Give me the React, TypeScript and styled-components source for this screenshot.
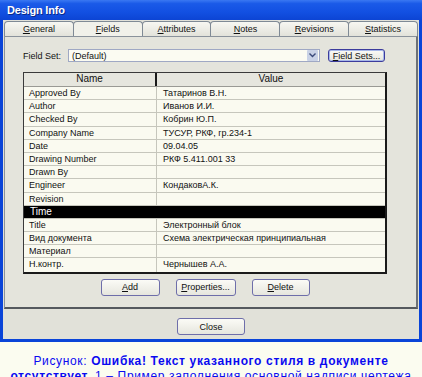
import * as React from 'react';
import styled, { createGlobalStyle } from 'styled-components';

const Global = createGlobalStyle`
  html, body {
    margin: 0;
    padding: 0;
    background: #fbfcf0;
  }
  body {
    font-family: 'Liberation Sans', Arial, sans-serif;
    width: 422px;
    height: 377px;
    overflow: hidden;
  }
`;

const Window = styled.div`
  width: 422px;
  display: flex;
  flex-direction: column;
`;
const TitleBar = styled.div`
  height: 20px;
  box-sizing: border-box;
  padding: 4px 0 0 7px;
  background: linear-gradient(#3a78f2 0%, #1a5ae8 18%, #1250e2 60%, #0c44d4 100%);
  color: #fff;
  font-size: 11px;
  font-weight: bold;
  letter-spacing: -0.2px;
  text-shadow: 1px 1px 0 #0a2a8a;
`;
const Body = styled.div`
  height: 322px;
  box-sizing: border-box;
  border: 3px solid #0a44d8;
  border-top: none;
  background: #e1e1d9;
  display: flex;
  flex-direction: column;
  align-items: center;
  padding-top: 1px;
`;
const TabRow = styled.div`
  width: 414px;
  height: 15px;
  display: flex;
`;
const Tab = styled.div<{ $active?: boolean }>`
  flex: 1;
  box-sizing: border-box;
  margin-left: -1px;
  border: 1px solid #7f8a95;
  border-bottom: none;
  border-radius: 4px 4px 0 0;
  background: ${p => (p.$active ? '#f1f1ea' : 'linear-gradient(#f7f7f2, #e2e2da)')};
  font-size: 9px;
  color: #111;
  text-align: center;
  line-height: 14px;
  &:first-child {
    margin-left: 0;
  }
`;
const Panel = styled.div`
  width: 414px;
  height: 273px;
  box-sizing: border-box;
  border: 1px solid #8a929b;
  border-bottom: 2px solid #55595e;
  border-right: 2px solid #6c7178;
  background: #e4e4dc;
  padding: 12px 0 0 18px;
  display: flex;
  flex-direction: column;
`;
const FieldRow = styled.div`
  display: flex;
  align-items: center;
  height: 13px;
  font-size: 9px;
  color: #111;
`;
const Label = styled.div`
  width: 45px;
`;
const Combo = styled.div`
  width: 252px;
  height: 13px;
  box-sizing: border-box;
  border: 1px solid #9fa8c4;
  background: #fbfbf2;
  display: flex;
  align-items: center;
  padding-left: 3px;
`;
const ComboText = styled.div`
  flex: 1;
`;
const ComboArrow = styled.div`
  width: 11px;
  height: 11px;
  margin-right: 1px;
  background: #c9d2e6;
  border-radius: 1px;
  display: flex;
  align-items: center;
  justify-content: center;
`;
const Button = styled.div<{ $w: number; $focus?: boolean }>`
  width: ${p => p.$w}px;
  height: 17px;
  box-sizing: border-box;
  border: 1px solid ${p => (p.$focus ? '#3c3c9c' : '#6e6eaa')};
  border-radius: 3px;
  background: linear-gradient(#fbfbf6, #e6e6de);
  font-size: 9px;
  color: #111;
  display: flex;
  align-items: center;
  justify-content: center;
  box-shadow: ${p => (p.$focus ? 'inset 0 0 0 1px #a8b8e8' : 'none')};
`;
const SmallButton = styled(Button)`
  height: 13px;
  margin-left: 8px;
`;
const Table = styled.div`
  width: 364px;
  margin-top: 10px;
  box-sizing: border-box;
  border: 1px solid #3a3a3a;
  border-right: 2px solid #1a1a1a;
  border-bottom: 2px solid #1a1a1a;
  background: #fafaf0;
  display: flex;
  flex-direction: column;
`;
const HeadRow = styled.div`
  display: grid;
  grid-template-columns: 133px 1fr;
  height: 13px;
  background: #e6e6de;
  border-bottom: 1px solid #9a9a94;
  font-size: 10px;
  color: #111;
`;
const HeadCell = styled.div<{ $sep?: boolean }>`
  text-align: center;
  line-height: 12px;
  border-right: ${p => (p.$sep ? '2px solid #1a1a1a' : 'none')};
`;
const Row = styled.div<{ $sel?: boolean }>`
  display: grid;
  grid-template-columns: 133px 1fr;
  height: 13.2px;
  box-sizing: border-box;
  border-bottom: 1px solid #c6c6bc;
  background: ${p => (p.$sel ? '#000' : 'transparent')};
  color: ${p => (p.$sel ? '#fff' : '#111')};
  font-size: 9px;
  &:last-child {
    border-bottom: none;
  }
`;
const Cell = styled.div<{ $sep?: boolean; $big?: boolean }>`
  padding-left: ${p => (p.$sep ? 5 : 6)}px;
  line-height: 12px;
  white-space: nowrap;
  overflow: hidden;
  font-size: ${p => (p.$big ? 10 : 9)}px;
  border-right: ${p => (p.$sep ? '1px solid #c6c6bc' : 'none')};
`;
const ButtonRow = styled.div`
  width: 364px;
  margin-top: 5px;
  display: flex;
  justify-content: center;
  gap: 16px;
`;
const CloseWrap = styled.div`
  margin-top: 9px;
`;
const Caption = styled.div`
  padding-top: 12px;
  text-align: center;
  color: #0a0af0;
  font-size: 12px;
  line-height: 15px;
  letter-spacing: 0.65px;
  white-space: nowrap;
  overflow: hidden;
`;

const rows: [string, string][] = [
  ['Approved By', 'Татаринов В.Н.'],
  ['Author', 'Иванов И.И.'],
  ['Checked By', 'Кобрин Ю.П.'],
  ['Company Name', 'ТУСУР,  РКФ,  гр.234-1'],
  ['Date', '09.04.05'],
  ['Drawing Number', 'РКФ 5.411.001 33'],
  ['Drawn By', ''],
  ['Engineer', 'КондаковА.К.'],
  ['Revision', ''],
  ['Time', ''],
  ['Title', 'Электронный блок'],
  ['Вид документа', 'Схема электрическая принципиальная'],
  ['Материал', ''],
  ['Н.контр.', 'Чернышев А.А.'],
];

export default function App() {
  return (
    <>
      <Global />
      <Window>
        <TitleBar>Design Info</TitleBar>
        <Body>
          <TabRow>
            <Tab><u>G</u>eneral</Tab>
            <Tab $active><u>F</u>ields</Tab>
            <Tab><u>A</u>ttributes</Tab>
            <Tab><u>N</u>otes</Tab>
            <Tab><u>R</u>evisions</Tab>
            <Tab><u>S</u>tatistics</Tab>
          </TabRow>
          <Panel>
            <FieldRow>
              <Label>Field Set:</Label>
              <Combo>
                <ComboText>(Default)</ComboText>
                <ComboArrow>
                  <svg width="7" height="5" viewBox="0 0 7 5">
                    <path d="M0.5 0.5 L3.5 3.5 L6.5 0.5" stroke="#3a4a7a" strokeWidth="1.4" fill="none" />
                  </svg>
                </ComboArrow>
              </Combo>
              <SmallButton $w={57} $focus><u>F</u>ield Sets...</SmallButton>
            </FieldRow>
            <Table>
              <HeadRow>
                <HeadCell $sep>Name</HeadCell>
                <HeadCell>Value</HeadCell>
              </HeadRow>
              {rows.map(([name, value], i) => (
                <Row key={i} $sel={name === 'Time'}>
                  <Cell $sep={name !== 'Time'} $big={name === 'Time'}>{name}</Cell>
                  <Cell>{value}</Cell>
                </Row>
              ))}
            </Table>
            <ButtonRow>
              <Button $w={59}><u>A</u>dd</Button>
              <Button $w={60}><u>P</u>roperties...</Button>
              <Button $w={58}><u>D</u>elete</Button>
            </ButtonRow>
          </Panel>
          <CloseWrap>
            <Button $w={68}>Close</Button>
          </CloseWrap>
        </Body>
      </Window>
      <Caption>
        Рисунок: <b>Ошибка! Текст указанного стиля в документе</b>
        <br />
        <b>отсутствует.</b> 1 – Пример заполнения основной надписи чертежа
      </Caption>
    </>
  );
}
